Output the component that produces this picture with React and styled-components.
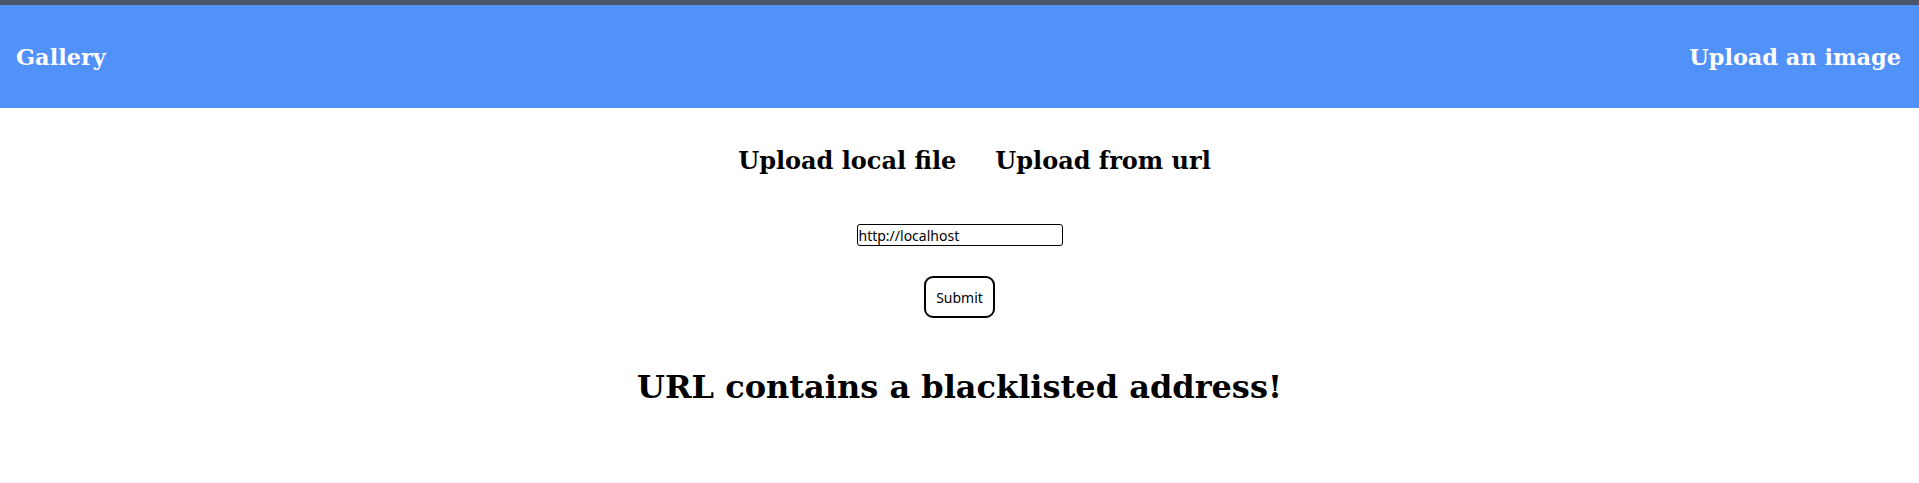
import React from 'react';
import styled, { createGlobalStyle } from 'styled-components';

const GlobalStyle = createGlobalStyle`
  body {
    margin: 0;
    background: #ffffff;
    font-family: 'DejaVu Serif', serif;
  }
`;

const TopStrip = styled.div`
  height: 5px;
  background-color: #4b5567;
`;

const NavBar = styled.nav`
  height: 103px;
  background-color: #5191fa;
  display: flex;
  align-items: center;
  justify-content: space-between;
  padding: 0 18px 0 16px;
`;

const NavLink = styled.a`
  color: #ffffff;
  font-family: 'DejaVu Serif', serif;
  font-weight: 700;
  font-size: 22.4px;
  text-decoration: none;
  cursor: pointer;
`;

const Main = styled.main`
  display: flex;
  flex-direction: column;
  align-items: center;
`;

const Tabs = styled.div`
  display: flex;
  gap: 39px;
  margin-top: 38px;
  padding-left: 30px;
`;

const Tab = styled.h2`
  margin: 0;
  font-family: 'DejaVu Serif', serif;
  font-weight: 700;
  font-size: 24px;
  color: #000000;
  cursor: pointer;
`;

const Form = styled.form`
  display: flex;
  flex-direction: column;
  align-items: center;
  margin-top: 49px;
  gap: 30px;
`;

const UrlInput = styled.input`
  box-sizing: border-box;
  width: 206px;
  height: 22px;
  padding: 0 1px;
  border: 1px solid #000000;
  border-radius: 3px;
  font-family: 'Noto Sans', sans-serif;
  font-size: 14px;
  color: #000000;
  outline: none;
`;

const SubmitButton = styled.button`
  box-sizing: border-box;
  width: 71px;
  height: 42px;
  background: #ffffff;
  border: 2px solid #000000;
  border-radius: 9px;
  font-family: 'Noto Sans', sans-serif;
  font-size: 14px;
  color: #000000;
  cursor: pointer;
`;

const ErrorMessage = styled.h1`
  margin: 50px 0 0;
  font-family: 'DejaVu Serif', serif;
  font-weight: 700;
  font-size: 32px;
  color: #000000;
`;

export default function App() {
  return (
    <>
      <GlobalStyle />
      <TopStrip />
      <NavBar>
        <NavLink>Gallery</NavLink>
        <NavLink>Upload an image</NavLink>
      </NavBar>
      <Main>
        <Tabs>
          <Tab>Upload local file</Tab>
          <Tab>Upload from url</Tab>
        </Tabs>
        <Form onSubmit={(e) => e.preventDefault()}>
          <UrlInput type="text" defaultValue="http://localhost" />
          <SubmitButton type="submit">Submit</SubmitButton>
        </Form>
        <ErrorMessage>URL contains a blacklisted address!</ErrorMessage>
      </Main>
    </>
  );
}
